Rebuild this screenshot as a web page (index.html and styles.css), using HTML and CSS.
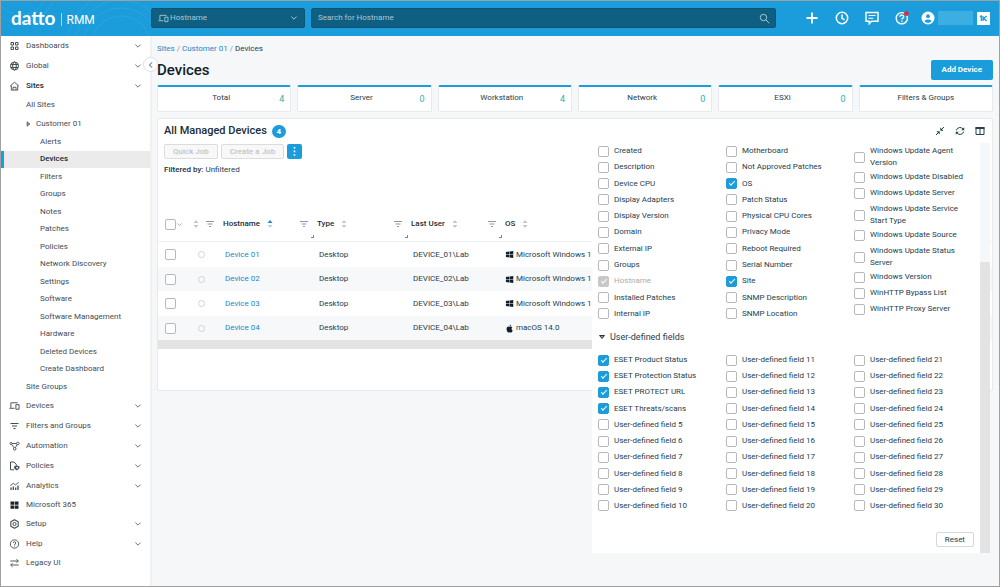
FILE: index.html
```html
<!DOCTYPE html>
<html lang="en">
<head>
<meta charset="utf-8">
<title>Devices | datto RMM</title>
<link rel="stylesheet" href="styles.css">
</head>
<body>
<svg class="sprite" aria-hidden="true">
  <symbol id="chev" viewBox="0 0 8 8"><path d="M1.400 2.600 4 5.200l2.600-2.600" fill="none" stroke="currentColor" stroke-width="1"/></symbol>
  <symbol id="filter" viewBox="0 0 10 10"><path d="M1 2.500h8M2.500 5h5M4 7.500h2" fill="none" stroke="currentColor" stroke-width="1"/></symbol>
  <symbol id="sort" viewBox="0 0 6 8"><path d="M3 0 5.500 3H.5z" class="up"/><path d="M3 8 .5 5h5z" class="down"/></symbol>
  <symbol id="devices" viewBox="0 0 12 10"><path d="M2 7V1.500h7.500M.5 7.500H6M7.500 3.500h3.500v5H7.500z" fill="none" stroke="currentColor"/></symbol>
  <symbol id="win" viewBox="0 0 10 10"><path d="M1 2.200 4.600 1.700v3H1zM5.100 1.600 9.200 1v3.700H5.100zM1 5.200h3.600v3L1 7.700zM5.100 5.200h4.100V9l-4.100-.6z" fill="currentColor"/></symbol>
</svg>
<div class="window">
  <header class="topbar">
    <svg class="arcs" viewBox="0 0 150 35" aria-hidden="true"><g fill="none" stroke="#fff" stroke-opacity=".07"><circle cx="120" cy="45" r="30"/><circle cx="120" cy="45" r="38"/><circle cx="120" cy="45" r="46"/><circle cx="120" cy="45" r="54"/><circle cx="20" cy="-12" r="26"/><circle cx="20" cy="-12" r="34"/></g></svg>
    <div class="brand"><span class="brand-name">datto</span><span class="brand-bar"></span><span class="brand-product">RMM</span></div>
    <div class="field picker">
      <svg width="11" height="9"><use href="#devices"/></svg>
      <select aria-label="Search type"><option>Hostname</option></select>
      <svg width="8" height="8"><use href="#chev"/></svg>
    </div>
    <div class="field search">
      <input type="text" aria-label="Search" placeholder="Search for Hostname">
      <svg width="11" height="11" viewBox="0 0 11 11" fill="none" stroke="currentColor"><circle cx="4.500" cy="4.500" r="3.200"/><path d="m7 7 3.300 3.300"/></svg>
    </div>
    <nav class="tools" aria-label="Tools">
      <button aria-label="Add"><svg viewBox="0 0 14 14"><path d="M7 1.500v11M1.500 7h11" stroke="currentColor" stroke-width="1.800"/></svg></button>
      <button aria-label="Recent"><svg viewBox="0 0 14 14" fill="none" stroke="currentColor" stroke-width="1.500"><circle cx="7" cy="7" r="5.700"/><path d="M7 3.500V7.300l2.600 1.500"/></svg></button>
      <button aria-label="Messages"><svg viewBox="0 0 14 14" fill="none" stroke="currentColor" stroke-width="1.400"><path d="M1 1.500h12v8.800H6.500L4.200 12.800v-2.500H1z"/><path d="M3.500 4.500h7M3.500 7.200h4.800" stroke-width="1.100"/></svg></button>
      <button aria-label="Help"><svg viewBox="0 0 14 14" fill="none" stroke="currentColor" stroke-width="1.400"><circle cx="6.800" cy="7.200" r="5.600"/><path d="M5 5.800c0-2.400 3.700-2.200 3.700 0 0 1.300-1.800 1.300-1.800 2.700M6.900 9.400v1.300"/><circle cx="11.400" cy="2.600" r="2.400" fill="#e02a2f" stroke="none"/></svg></button>
      <button aria-label="Account" class="account"><svg viewBox="0 0 14 14"><circle cx="7" cy="7" r="6.500" fill="currentColor"/><circle cx="7" cy="5.200" r="1.900" fill="#1b9ddb"/><path d="M3.500 10.200c.8-2.400 6.200-2.400 7 0-1.800 2-5.200 2-7 0z" fill="#1b9ddb"/></svg><span class="account-name"></span></button>
      <button aria-label="Apps" class="apps"><svg viewBox="0 0 13 13"><path d="M0 0h13v13H0z" fill="#fff"/><path d="M2.800 4.700 4.300 4v5M6 4v5M9.700 4 6.700 6.500l3 2.500" fill="none" stroke="#1b9ddb" stroke-width="1.300"/></svg></button>
    </nav>
  </header>

  <div class="body">
    <aside class="sidebar">
      <button class="collapse" aria-label="Collapse menu"><svg viewBox="0 0 8 8"><path d="M5 1.300 2.500 4 5 6.700" fill="none" stroke="currentColor"/></svg></button>
      <ul class="menu">
        <li><a href="#"><svg viewBox="0 0 10 10" fill="none" stroke="currentColor"><path d="M1.500 1.500h2.500V4H1.500zM6 1.500h2.500V4H6zM1.500 6h2.500v2.500H1.500zM6 6h2.500v2.500H6z"/></svg><span>Dashboards</span><svg class="arrow"><use href="#chev"/></svg></a></li>
        <li><a href="#"><svg viewBox="0 0 10 10" fill="none" stroke="currentColor"><circle cx="5" cy="5" r="4"/><ellipse cx="5" cy="5" rx="1.800" ry="4"/><path d="M1.300 3.500h7.400M1.300 6.500h7.400"/></svg><span>Global</span><svg class="arrow"><use href="#chev"/></svg></a></li>
        <li><a href="#" class="open"><svg viewBox="0 0 10 10" fill="none" stroke="currentColor" stroke-width=".9"><path d="M.6 5.200 5 1.200l4.400 4M1.800 4.500v4.600h6.400V4.500M3.500 9V6.300h3V9"/></svg><span>Sites</span><svg class="arrow"><use href="#chev"/></svg></a>
          <ul>
            <li><a href="#" class="short">All Sites</a></li>
            <li><a href="#" class="customer"><svg viewBox="0 0 6 8"><path d="M1 1v6l4-3z" fill="#999" stroke="#444" stroke-width=".8"/></svg>Customer 01</a>
              <ul class="pages">
                <li><a href="#">Alerts</a></li>
                <li><a href="#" class="current" aria-current="page">Devices</a></li>
                <li><a href="#">Filters</a></li>
                <li><a href="#">Groups</a></li>
                <li><a href="#">Notes</a></li>
                <li><a href="#">Patches</a></li>
                <li><a href="#">Policies</a></li>
                <li><a href="#">Network Discovery</a></li>
                <li><a href="#">Settings</a></li>
                <li><a href="#">Software</a></li>
                <li><a href="#">Software Management</a></li>
                <li><a href="#">Hardware</a></li>
                <li><a href="#">Deleted Devices</a></li>
                <li><a href="#">Create Dashboard</a></li>
              </ul>
            </li>
            <li><a href="#" class="short">Site Groups</a></li>
          </ul>
        </li>
        <li><a href="#"><svg viewBox="0 0 12 10"><use href="#devices"/></svg><span>Devices</span><svg class="arrow"><use href="#chev"/></svg></a></li>
        <li><a href="#"><svg viewBox="0 0 10 10"><use href="#filter"/></svg><span>Filters and Groups</span><svg class="arrow"><use href="#chev"/></svg></a></li>
        <li><a href="#"><svg viewBox="0 0 10 10" fill="none" stroke="currentColor" stroke-width=".9"><circle cx="1.600" cy="2.500" r="1.100"/><circle cx="8.300" cy="2.500" r="1.300"/><circle cx="5.200" cy="7.800" r="1.300"/><path d="M2.700 2.500H7M2.200 3.500l2.300 3.200M7.600 3.700 5.900 6.600"/></svg><span>Automation</span><svg class="arrow"><use href="#chev"/></svg></a></li>
        <li><a href="#"><svg viewBox="0 0 10 10"><path d="M4.500 8.800H1V1h3.500l2.200 2.200v1.300" fill="none" stroke="currentColor"/><path d="M7.200 4.200 10 5.400v1.800L7.200 9.600 4.600 7.200V5.400z" fill="currentColor"/><circle cx="7.600" cy="6.700" r=".9" fill="#fff"/></svg><span>Policies</span><svg class="arrow"><use href="#chev"/></svg></a></li>
        <li><a href="#"><svg viewBox="0 0 10 10" fill="none" stroke="currentColor"><path d="M1.500 9V6.500M3.800 9V5.500M6.200 9V6.500M8.500 9V4.500" stroke-width="1.300"/><path d="m.8 4.700 3-2.400 2 1.700 3.400-2.700" stroke-width=".9"/></svg><span>Analytics</span><svg class="arrow"><use href="#chev"/></svg></a></li>
        <li><a href="#" class="plain"><svg viewBox="0 0 10 10"><path d="M1 1.500h3.700v3.300H1zM5.300 1.500H9v3.300H5.300zM1 5.400h3.700v3.300H1zM5.300 5.400H9v3.300H5.300z" fill="#1c2226"/></svg><span>Microsoft 365</span></a></li>
        <li><a href="#"><svg viewBox="0 0 10 10" fill="none" stroke="currentColor"><path d="M5 .7 8.700 2.800v4.400L5 9.300 1.300 7.200V2.800z" stroke-width="1.100" stroke-linejoin="round"/><circle cx="5" cy="5" r="1.600"/></svg><span>Setup</span><svg class="arrow"><use href="#chev"/></svg></a></li>
        <li><a href="#"><svg viewBox="0 0 10 10" fill="none" stroke="currentColor" stroke-width=".9"><circle cx="5" cy="5" r="4.200"/><path d="M3.700 4c0-1.700 2.600-1.600 2.600 0C6.300 5 5 5 5 6.100M5 6.700v.9"/></svg><span>Help</span><svg class="arrow"><use href="#chev"/></svg></a></li>
        <li><a href="#" class="plain"><svg viewBox="0 0 10 10" fill="none" stroke="currentColor"><path d="M.8 3h8M7 1.200 8.800 3 7 4.800M9.200 7h-8M3 5.200 1.200 7 3 8.800" stroke-width=".9"/></svg><span>Legacy UI</span></a></li>
      </ul>
    </aside>

    <main class="main">
      <nav class="crumbs" aria-label="Breadcrumb"><a href="#">Sites</a> / <a href="#">Customer 01</a> / <span>Devices</span></nav>
      <div class="title-row"><h1>Devices</h1><button class="primary">Add Device</button></div>
      <section class="stats">
        <div class="stat"><span>Total</span><b>4</b></div>
        <div class="stat"><span>Server</span><b>0</b></div>
        <div class="stat"><span>Workstation</span><b>4</b></div>
        <div class="stat"><span>Network</span><b>0</b></div>
        <div class="stat"><span>ESXi</span><b>0</b></div>
        <div class="stat"><span>Filters &amp; Groups</span></div>
      </section>

      <section class="panel">
        <div class="panel-head">
          <h2>All Managed Devices</h2><span class="badge">4</span>
          <div class="panel-tools">
            <button aria-label="Compact"><svg viewBox="0 0 10 10"><path d="M5.300 1.500v3.200h3.200zM1.500 5.300h3.200v3.200z" fill="currentColor"/><path d="M6 4 9 1M1 9l3-3" stroke="currentColor" stroke-width="1"/></svg></button>
            <button aria-label="Refresh"><svg viewBox="0 0 10 10"><path d="M1.300 4.400A3.800 3.800 0 0 1 8 3M8.700 5.600A3.800 3.800 0 0 1 2 7" fill="none" stroke="currentColor"/><path d="M9.200 1.200v3H6.300zM.8 8.800v-3h2.900z" fill="currentColor"/></svg></button>
            <button aria-label="Columns"><svg viewBox="0 0 10 10"><path d="M1 1.500h8v7H1zM5 2v6.500" fill="none" stroke="currentColor"/><path d="M.5 1h9v2h-9z" fill="currentColor"/></svg></button>
          </div>
        </div>
        <div class="actions">
          <button class="ghost" disabled>Quick Job</button>
          <button class="ghost" disabled>Create a Job</button>
          <button class="more" aria-label="More actions"><svg viewBox="0 0 3 9"><path d="M.7 0h1.600v1.600H.7zM.7 3.600h1.600v1.600H.7zM.7 7.200h1.600v1.600H.7z" fill="#fff"/></svg></button>
        </div>
        <p class="filtered"><strong>Filtered by:</strong> Unfiltered</p>
        <table class="grid">
          <colgroup><col class="c-check"><col class="c-status"><col class="c-std"><col class="c-std"><col class="c-std"><col></colgroup>
          <thead><tr>
            <th><div class="th"><input type="checkbox" aria-label="Select all"><svg class="chev" width="7" height="7"><use href="#chev"/></svg></div></th>
            <th><div class="th"><svg class="sort"><use href="#sort"/></svg><svg class="filter"><use href="#filter"/></svg></div></th>
            <th class="sized"><div class="th">Hostname<svg class="sort asc"><use href="#sort"/></svg><svg class="filter"><use href="#filter"/></svg></div></th>
            <th class="sized"><div class="th">Type<svg class="sort"><use href="#sort"/></svg><svg class="filter"><use href="#filter"/></svg></div></th>
            <th class="sized"><div class="th">Last User<svg class="sort"><use href="#sort"/></svg><svg class="filter"><use href="#filter"/></svg></div></th>
            <th><div class="th">OS<svg class="sort"><use href="#sort"/></svg></div></th>
          </tr></thead>
          <tbody>
            <tr><td><input type="checkbox" aria-label="Select Device 01"></td><td><span class="dot"></span></td><td><a href="#">Device 01</a></td><td>Desktop</td><td>DEVICE_01\Lab</td><td><div class="os"><svg viewBox="0 0 10 10"><use href="#win"/></svg>Microsoft Windows 11</div></td></tr>
            <tr><td><input type="checkbox" aria-label="Select Device 02"></td><td><span class="dot"></span></td><td><a href="#">Device 02</a></td><td>Desktop</td><td>DEVICE_02\Lab</td><td><div class="os"><svg viewBox="0 0 10 10"><use href="#win"/></svg>Microsoft Windows 11</div></td></tr>
            <tr><td><input type="checkbox" aria-label="Select Device 03"></td><td><span class="dot"></span></td><td><a href="#">Device 03</a></td><td>Desktop</td><td>DEVICE_03\Lab</td><td><div class="os"><svg viewBox="0 0 10 10"><use href="#win"/></svg>Microsoft Windows 11</div></td></tr>
            <tr><td><input type="checkbox" aria-label="Select Device 04"></td><td><span class="dot"></span></td><td><a href="#">Device 04</a></td><td>Desktop</td><td>DEVICE_04\Lab</td><td><div class="os"><svg viewBox="0 0 10 10"><path d="M5 3.200C3.500 2.300 1.700 3.300 1.700 5.500 1.700 7.500 3 9.400 4 9.400c.5 0 .8-.3 1.300-.3s.8.300 1.300.300c.8 0 1.600-1.200 1.900-2.300C7 6.400 6.900 4.300 8.200 3.700 7.300 2.600 6 2.800 5 3.200zM5 2.600C5 1.500 5.800.7 6.800.5 6.900 1.600 6.100 2.500 5 2.600z" fill="currentColor"/></svg>macOS 14.0</div></td></tr>
          </tbody>
        </table>
        <div class="hscroll"></div>

        <form class="chooser">
          <div class="chooser-body">
            <div class="cols">
              <ul>
                <li><label><input type="checkbox">Created</label></li>
                <li><label><input type="checkbox">Description</label></li>
                <li><label><input type="checkbox">Device CPU</label></li>
                <li><label><input type="checkbox">Display Adapters</label></li>
                <li><label><input type="checkbox">Display Version</label></li>
                <li><label><input type="checkbox">Domain</label></li>
                <li><label><input type="checkbox">External IP</label></li>
                <li><label><input type="checkbox">Groups</label></li>
                <li><label class="off"><input type="checkbox" checked disabled>Hostname</label></li>
                <li><label><input type="checkbox">Installed Patches</label></li>
                <li><label><input type="checkbox">Internal IP</label></li>
              </ul>
              <ul>
                <li><label><input type="checkbox">Motherboard</label></li>
                <li><label><input type="checkbox">Not Approved Patches</label></li>
                <li><label><input type="checkbox" checked>OS</label></li>
                <li><label><input type="checkbox">Patch Status</label></li>
                <li><label><input type="checkbox">Physical CPU Cores</label></li>
                <li><label><input type="checkbox">Privacy Mode</label></li>
                <li><label><input type="checkbox">Reboot Required</label></li>
                <li><label><input type="checkbox">Serial Number</label></li>
                <li><label><input type="checkbox" checked>Site</label></li>
                <li><label><input type="checkbox">SNMP Description</label></li>
                <li><label><input type="checkbox">SNMP Location</label></li>
              </ul>
              <ul class="natural">
                <li><label class="tall"><input type="checkbox">Windows Update Agent Version</label></li>
                <li><label><input type="checkbox">Windows Update Disabled</label></li>
                <li><label><input type="checkbox">Windows Update Server</label></li>
                <li><label class="tall"><input type="checkbox">Windows Update Service Start Type</label></li>
                <li><label><input type="checkbox">Windows Update Source</label></li>
                <li><label class="tall"><input type="checkbox">Windows Update Status Server</label></li>
                <li><label><input type="checkbox">Windows Version</label></li>
                <li><label><input type="checkbox">WinHTTP Bypass List</label></li>
                <li><label><input type="checkbox">WinHTTP Proxy Server</label></li>
              </ul>
            </div>
            <button type="button" class="group"><svg viewBox="0 0 8 6"><path d="M1.500 1.500h5L4 4.500z" fill="#999" stroke="#333"/></svg>User-defined fields</button>
            <div class="cols custom">
              <ul>
                <li><label><input type="checkbox" checked>ESET Product Status</label></li>
                <li><label><input type="checkbox" checked>ESET Protection Status</label></li>
                <li><label><input type="checkbox" checked>ESET PROTECT URL</label></li>
                <li><label><input type="checkbox" checked>ESET Threats/scans</label></li>
                <li><label><input type="checkbox">User-defined field 5</label></li>
                <li><label><input type="checkbox">User-defined field 6</label></li>
                <li><label><input type="checkbox">User-defined field 7</label></li>
                <li><label><input type="checkbox">User-defined field 8</label></li>
                <li><label><input type="checkbox">User-defined field 9</label></li>
                <li><label><input type="checkbox">User-defined field 10</label></li>
              </ul>
              <ul>
                <li><label><input type="checkbox">User-defined field 11</label></li>
                <li><label><input type="checkbox">User-defined field 12</label></li>
                <li><label><input type="checkbox">User-defined field 13</label></li>
                <li><label><input type="checkbox">User-defined field 14</label></li>
                <li><label><input type="checkbox">User-defined field 15</label></li>
                <li><label><input type="checkbox">User-defined field 16</label></li>
                <li><label><input type="checkbox">User-defined field 17</label></li>
                <li><label><input type="checkbox">User-defined field 18</label></li>
                <li><label><input type="checkbox">User-defined field 19</label></li>
                <li><label><input type="checkbox">User-defined field 20</label></li>
              </ul>
              <ul>
                <li><label><input type="checkbox">User-defined field 21</label></li>
                <li><label><input type="checkbox">User-defined field 22</label></li>
                <li><label><input type="checkbox">User-defined field 23</label></li>
                <li><label><input type="checkbox">User-defined field 24</label></li>
                <li><label><input type="checkbox">User-defined field 25</label></li>
                <li><label><input type="checkbox">User-defined field 26</label></li>
                <li><label><input type="checkbox">User-defined field 27</label></li>
                <li><label><input type="checkbox">User-defined field 28</label></li>
                <li><label><input type="checkbox">User-defined field 29</label></li>
                <li><label><input type="checkbox">User-defined field 30</label></li>
              </ul>
            </div>
            <div class="chooser-foot"><button type="reset">Reset</button></div>
          </div>
          <div class="vscroll"><div class="thumb"></div></div>
        </form>
      </section>
    </main>
  </div>
</div>
</body>
</html>
```
FILE: styles.css
```css
* { box-sizing: border-box; }
body {
  margin: 0;
  background: #f5f7f9;
  color: #24404e;
  font: 8px/12px Roboto, "Liberation Sans", sans-serif;
}
ul { list-style: none; margin: 0; padding: 0; }
a { color: inherit; text-decoration: none; }
h1, h2, p { margin: 0; }
button, input, select { font: inherit; color: inherit; margin: 0; padding: 0; border: 0; background: none; }
svg { display: block; flex: none; }
.sprite { position: absolute; width: 0; height: 0; }

.window {
  display: flex;
  flex-direction: column;
  min-height: 100vh;
  border: 1px solid #a0a0a0;
}

/* Top bar */
.topbar {
  position: relative;
  display: flex;
  align-items: center;
  height: 35px;
  padding: 0 9px 1px 0;
  background: #1b9ddb;
  color: #fff;
}
.arcs { position: absolute; left: 0; top: 0; width: 150px; height: 35px; }
.brand { display: flex; align-items: center; width: 150px; padding-left: 10px; }
.brand-name { font: 700 19px/24px Lato, sans-serif; }
.brand-bar { width: 1px; height: 13px; margin: 3px 5px 0 5px; background: #a5d8f1; }
.brand-product { padding-top: 3px; font-size: 12px; line-height: 16px; }
.field {
  display: flex;
  align-items: center;
  height: 20px;
  padding: 0 6px;
  border: 1px solid #0d5475;
  border-radius: 2px;
  background: #0f5f82;
  color: #a9c8d5;
}
.picker { width: 154px; gap: 1px; }
.picker select { flex: 1; appearance: none; }
.search { flex: 1; margin-left: 6px; padding-right: 5px; }
.search input { flex: 1; min-width: 0; outline: none; }
.search input::placeholder { color: #a9c8d5; opacity: 1; }
.tools { display: flex; align-items: center; gap: 16px; margin-left: 29px; }
.tools button { display: flex; align-items: center; }
.tools svg { width: 14px; height: 14px; }
.tools .apps svg { width: 13px; height: 13px; }
.tools .account { margin: 0 -12px 0 -4px; gap: 3px; }
.account-name { width: 35px; height: 14px; background: #3caee2; }

.body { display: flex; flex: 1; }

/* Sidebar */
.sidebar {
  position: relative;
  width: 151px;
  border-right: 2px solid #eff1f3;
  background: #fff;
  color: #434d54;
}
.collapse {
  position: absolute;
  right: -8px;
  top: 21px;
  display: grid;
  place-items: center;
  width: 15px;
  height: 15px;
  border: 1px solid #dde0e3;
  border-radius: 50%;
  background: #fff;
}
.collapse svg { width: 8px; height: 8px; }
.menu a { display: flex; align-items: center; height: 18px; }
.menu > li > a { height: 20px; padding: 0 8px; }
.menu > li > a.plain { height: 18px; }
.menu > li > a > span { flex: 1; padding-left: 6px; }
.menu > li > a > svg { width: 11px; height: 10px; }
.menu > li > a > .arrow { width: 8px; height: 8px; color: #6a7379; }
.menu .open span, .menu .current { color: #222c33; font-weight: 500; }
.menu a.short { padding-left: 25px; }
.menu a.customer { height: 19px; padding-left: 25px; gap: 5px; }
.customer svg { width: 5px; height: 6px; }
.pages { display: grid; grid-auto-rows: 1fr; min-height: 245px; }
.pages a { height: 100%; padding-left: 36px; border-left: 3px solid transparent; }
.menu .current { border-left-color: #1b9ddb; background: #ebebeb; }

/* Page heading */
.main { flex: 1; min-width: 0; padding: 7px 6px 0 5px; }
.crumbs { margin-bottom: 5px; color: #8a969d; }
.crumbs a, .grid a { color: #2089c9; }
.crumbs span { color: #24404e; }
.title-row { display: flex; align-items: center; justify-content: space-between; height: 20px; margin-bottom: 5px; }
h1 { color: #101f2b; font-size: 15px; line-height: 20px; font-weight: 500; }
.primary { height: 20px; padding: 0 11px; border-radius: 2px; background: #1b9ddb; color: #fff; font-weight: 700; }

.stats { display: grid; grid-template-columns: repeat(6, 1fr); gap: 6px; margin-bottom: 6px; }
.stat {
  position: relative;
  height: 27px;
  padding-top: 5px;
  border: 1px solid #e6eaed;
  border-top: 2px solid #1b9ddb;
  border-radius: 2px;
  background: #fff;
  text-align: center;
}
.stat b { position: absolute; right: 6px; top: 6px; color: #27b3a8; font-size: 9px; font-weight: 400; }
.stat span { padding-right: 6px; }
.stat span:last-child { padding-right: 0; }

/* Devices panel */
.panel { position: relative; min-height: 273px; padding-top: 5px; border: 1px solid #e6eaed; border-radius: 2px; background: #fff; }
.panel-head { display: flex; align-items: center; height: 14px; padding: 0 7px 0 6px; margin-bottom: 6px; }
h2 { color: #1a2e3a; font-size: 11px; line-height: 14px; font-weight: 500; }
.badge { width: 14px; height: 13px; margin-left: 5px; border-radius: 7px; background: #1b9ddb; color: #fff; text-align: center; line-height: 13px; font-weight: 700; }
.panel-tools { display: flex; gap: 10px; margin-left: auto; }
.panel-tools svg { width: 10px; height: 10px; }
.actions { display: flex; gap: 3px; padding-left: 6px; margin-bottom: 5px; }
.ghost { height: 15px; padding: 0 8px; border: 1px solid #dcdcdc; border-radius: 2px; background: #f8f8f8; color: #bfc3c5; font-weight: 500; }
.more { display: grid; place-items: center; width: 15px; height: 15px; border-radius: 2px; background: #1b9ddb; }
.more svg { width: 3px; height: 9px; }
.filtered { padding-left: 6px; margin-bottom: 32px; }
.filtered strong { font-weight: 500; color: #1a2e3a; }

.grid { width: 100%; border-collapse: collapse; table-layout: fixed; }
.c-check { width: 32px; }
.c-status { width: 30px; }
.c-std { width: 94px; }
.grid th { height: 33px; padding: 0 3px; border-bottom: 1px solid #eef1f3; font-weight: 500; color: #1a2e3a; text-align: left; }
.grid th:first-child, .grid td:first-child { padding: 0 0 0 7px; }
.th { position: relative; display: flex; align-items: center; height: 32px; }
.sized .th::after { content: ""; position: absolute; right: -3px; bottom: 2px; width: 2px; height: 2px; border: solid #7b8488; border-width: 0 1px 1px 0; }
.sort { width: 6px; height: 8px; margin-left: 7px; color: #c3c8cb; fill: currentColor; }
.asc { color: #b7d3ea; --up: #1a86e0; }
.sort + .filter { width: 10px; height: 10px; margin-left: auto; margin-right: 2px; color: #8f989d; }
.grid th:nth-child(2) .sort { margin-left: 0; }
.up { fill: var(--up, currentColor); }
.chev { color: #aab1b5; }
.grid td { height: 24px; padding: 0 5px; }
.grid tbody tr:nth-child(odd) td { height: 25px; }
.grid tbody tr:first-child td { height: 26px; padding-top: 1px; }
.grid tbody tr:nth-child(even) { background: #f6f8fa; }
.dot { display: block; width: 7px; height: 7px; margin-left: 3px; border: 1px solid #cfd4d7; border-radius: 50%; }
.os { display: flex; align-items: center; gap: 2px; white-space: nowrap; overflow: hidden; margin-left: -2px; }
.os svg { width: 9px; height: 9px; color: #101f2b; }
.hscroll { height: 9px; margin-right: 2px; background: #e3e3e3; }

input[type="checkbox"] {
  appearance: none;
  display: grid;
  place-items: center;
  flex: none;
  width: 11px;
  height: 11px;
  border: 1px solid #b5b9bc;
  border-radius: 2px;
  background: #fff;
}
input[type="checkbox"]:checked { border-color: #1b9ddb; background: #1b9ddb; }
input[type="checkbox"]:checked:disabled { border-color: #c8c8c8; background: #c8c8c8; }
input[type="checkbox"]:checked::after {
  content: "";
  width: 5px;
  height: 2px;
  margin-bottom: 2px;
  border: solid #fff;
  border-width: 0 0 1px 1px;
  transform: rotate(-45deg);
}

/* Column chooser */
.chooser { position: absolute; right: 2px; top: 24px; display: flex; width: 398px; background: #fff; }
.chooser-body { flex: 1; padding-left: 6px; }
.cols { display: grid; grid-template-columns: 128px 128px 1fr; }
.cols ul { display: flex; flex-direction: column; justify-content: space-between; min-height: 179px; }
.cols.custom ul { min-height: 162px; }
.cols .natural { justify-content: flex-start; padding-right: 10px; }
.cols label { display: flex; align-items: center; gap: 5px; min-height: 16px; }
.cols label.tall { min-height: 26px; padding: 2px 8px 0 0; }
.cols .off { color: #a7adb1; }
.group { display: flex; align-items: center; gap: 4px; height: 30px; font-size: 9px; }
.group svg { width: 8px; height: 6px; }
.chooser-foot { display: flex; justify-content: flex-end; padding: 18px 6px 6px 0; }
.chooser-foot button { height: 15px; padding: 0 8px; border: 1px solid #d5d8da; border-radius: 2px; }
.vscroll { display: flex; align-items: flex-end; width: 10px; background: #f6f7f9; }
.thumb { width: 100%; height: 71%; background: #e3e3e3; }
```
